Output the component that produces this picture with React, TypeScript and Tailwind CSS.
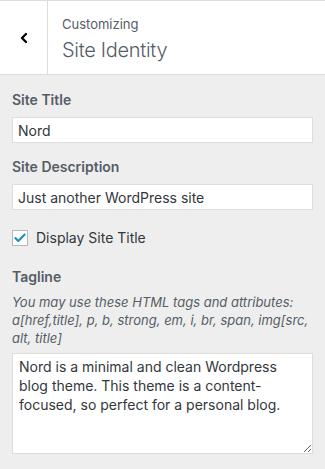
import { Check, ChevronLeft } from 'lucide-react';

const FONT = { fontFamily: 'Inter, "Liberation Sans", Arial, sans-serif' };

function Field({ label, value }: { label: string; value: string }) {
  return (
    <div className="mb-[14px]">
      <label className="block h-5 text-[14px] font-semibold leading-5 text-[#555d66]">{label}</label>
      <div className="mt-[7px] flex h-[26px] items-center border border-[#ddd] bg-white px-[5px] text-[14px] text-[#32373c]">
        {value}
      </div>
    </div>
  );
}

export default function App() {
  return (
    <div className="h-[469px] w-[325px] overflow-hidden bg-[#eee]" style={FONT}>
      <header className="flex h-[75px] border-y border-[#ddd] bg-white">
        <button
          type="button"
          className="flex w-[48px] items-center justify-center border-r border-[#ddd] text-black"
          aria-label="Back"
        >
          <ChevronLeft size={16} strokeWidth={3.5} />
        </button>
        <div className="flex flex-col pl-[14px] pt-[13px]">
          <span className="text-[13px] leading-5 text-[#555d66]">Customizing</span>
          <span className="mt-[2px] text-[20px] font-light leading-7 tracking-[-0.3px] text-[#555d66]">
            Site Identity
          </span>
        </div>
      </header>

      <div className="px-3 pt-[15px]">
        <Field label="Site Title" value="Nord" />
        <Field label="Site Description" value="Just another WordPress site" />

        <div className="mt-[17px] flex items-center gap-2">
          <span className="flex h-4 w-4 items-center justify-center border border-[#b4b9be] bg-white text-[#1e8cbe]">
            <Check size={14} strokeWidth={3.5} />
          </span>
          <span className="text-[14px] text-[#32373c]">Display Site Title</span>
        </div>

        <div className="mt-[19px] text-[14px] font-semibold leading-5 text-[#555d66]">Tagline</div>
        <p className="mt-[6px] text-[13px] italic leading-[18px] text-[#555d66]">
          You may use these HTML tags and attributes: a[href,title], p, b, strong, em, i, br, span, img[src, alt, title]
        </p>
        <textarea
          readOnly
          className="mt-[6px] block h-[101px] w-full resize-y border border-[#ddd] bg-white px-[6px] py-[3px] text-[14px] leading-[19px] text-[#32373c] outline-none"
          defaultValue="Nord is a minimal and clean Wordpress blog theme. This theme is a content-focused, so perfect for a personal blog."
        />
      </div>
    </div>
  );
}
